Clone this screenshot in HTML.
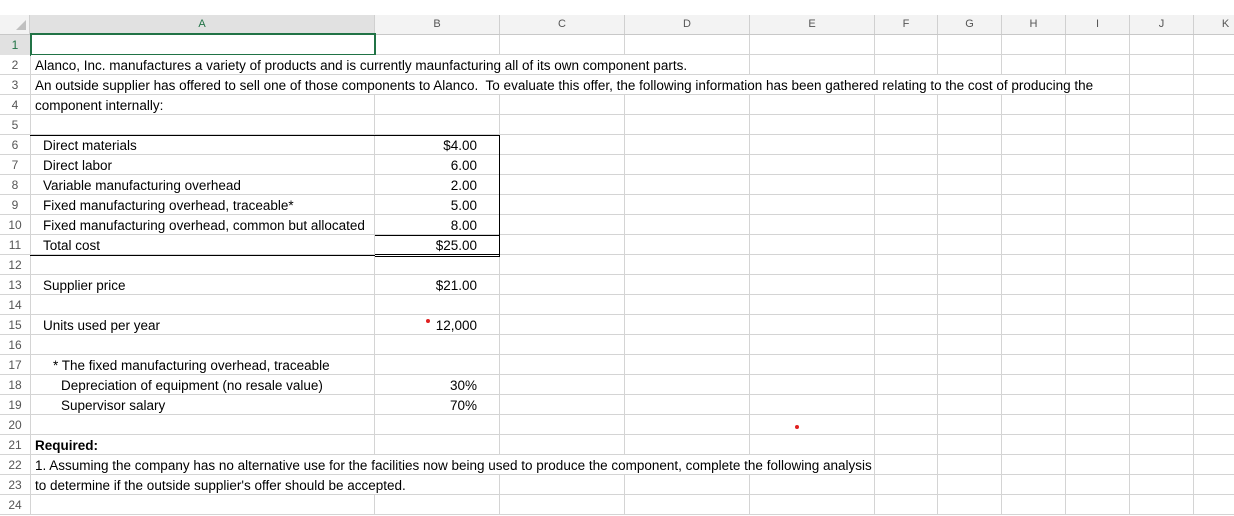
<!DOCTYPE html>
<html><head><style>
body{margin:0;width:1234px;height:510px;overflow:hidden;background:#fff;font-family:"Liberation Sans",sans-serif;font-size:13.5px;color:#000;position:relative}
#grid{position:absolute;left:0;top:35px;width:1234px;height:480px;
background-image:
linear-gradient(#d4d4d4,#d4d4d4),linear-gradient(#d4d4d4,#d4d4d4),linear-gradient(#d4d4d4,#d4d4d4),linear-gradient(#d4d4d4,#d4d4d4),linear-gradient(#d4d4d4,#d4d4d4),linear-gradient(#d4d4d4,#d4d4d4),linear-gradient(#d4d4d4,#d4d4d4),linear-gradient(#d4d4d4,#d4d4d4),linear-gradient(#d4d4d4,#d4d4d4),linear-gradient(#d4d4d4,#d4d4d4),linear-gradient(#d4d4d4,#d4d4d4),
repeating-linear-gradient(to bottom,transparent 0,transparent 19px,#d4d4d4 19px,#d4d4d4 20px);
background-size:1px 100%,1px 100%,1px 100%,1px 100%,1px 100%,1px 100%,1px 100%,1px 100%,1px 100%,1px 100%,1px 100%,100% 100%;
background-position:30px 0,374px 0,499px 0,624px 0,749px 0,874px 0,937px 0,1001px 0,1065px 0,1129px 0,1193px 0,0 0;
background-repeat:no-repeat}
#hdr{position:absolute;left:0;top:15px;width:1234px;height:19px;background:#f3f3f3;border-bottom:1px solid #c8c8c8}
.ch{position:absolute;top:15px;height:19px;line-height:19px;text-align:center;color:#555;font-size:11px;border-right:1px solid #d0d0d0;box-sizing:border-box}
.rn{position:absolute;left:0;width:30px;height:20px;line-height:21px;text-align:center;color:#555;font-size:12px}
.t{position:absolute;height:19px;line-height:21px;background:#fff;white-space:nowrap;box-sizing:border-box}
.n{position:absolute;left:375px;width:102px;height:19px;line-height:21px;text-align:right;background:#fff}
.b{position:absolute;background:#000}
</style></head><body>
<div id="hdr"></div>
<div style="position:absolute;left:0;top:15px;width:30px;height:19px;background:#f3f3f3;border-right:1px solid #d0d0d0;box-sizing:border-box"></div>
<div style="position:absolute;left:16px;top:20px;width:0;height:0;border-left:10px solid transparent;border-bottom:10px solid #c0c0c0"></div>
<div class="ch" style="left:30px;width:345px;background:#e1e1e1;color:#217346;border-bottom:2px solid #217346;height:20px">A</div>
<div class="ch" style="left:375px;width:125px">B</div>
<div class="ch" style="left:500px;width:125px">C</div>
<div class="ch" style="left:625px;width:125px">D</div>
<div class="ch" style="left:750px;width:125px">E</div>
<div class="ch" style="left:875px;width:63px">F</div>
<div class="ch" style="left:938px;width:64px">G</div>
<div class="ch" style="left:1002px;width:64px">H</div>
<div class="ch" style="left:1066px;width:64px">I</div>
<div class="ch" style="left:1130px;width:64px">J</div>
<div class="ch" style="left:1194px;width:64px">K</div>
<div id="grid"></div>
<div style="position:absolute;left:0;top:35px;width:30px;height:20px;background:#e1e1e1"></div>
<div class="rn" style="top:35px;color:#217346">1</div><div class="rn" style="top:55px">2</div><div class="rn" style="top:75px">3</div><div class="rn" style="top:95px">4</div><div class="rn" style="top:115px">5</div><div class="rn" style="top:135px">6</div><div class="rn" style="top:155px">7</div><div class="rn" style="top:175px">8</div><div class="rn" style="top:195px">9</div><div class="rn" style="top:215px">10</div><div class="rn" style="top:235px">11</div><div class="rn" style="top:255px">12</div><div class="rn" style="top:275px">13</div><div class="rn" style="top:295px">14</div><div class="rn" style="top:315px">15</div><div class="rn" style="top:335px">16</div><div class="rn" style="top:355px">17</div><div class="rn" style="top:375px">18</div><div class="rn" style="top:395px">19</div><div class="rn" style="top:415px">20</div><div class="rn" style="top:435px">21</div><div class="rn" style="top:455px">22</div><div class="rn" style="top:475px">23</div><div class="rn" style="top:495px">24</div>
<div style="position:absolute;left:30px;top:33px;width:346px;height:23px;border:2px solid #217346;box-sizing:border-box"></div>
<div class="t" style="top:55px;left:31px;width:718px;padding-left:4px">Alanco, Inc. manufactures a variety of products and is currently maunfacturing all of its own component parts.</div>
<div class="t" style="top:75px;left:31px;width:1098px;padding-left:4px">An outside supplier has offered to sell one of those components to Alanco.&nbsp; To evaluate this offer, the following information has been gathered relating to the cost of producing the</div>
<div class="t" style="top:95px;left:31px;width:343px;padding-left:4px">component internally:</div>
<div class="t" style="top:135px;left:43px">Direct materials</div>
<div class="t" style="top:155px;left:43px">Direct labor</div>
<div class="t" style="top:175px;left:43px">Variable manufacturing overhead</div>
<div class="t" style="top:195px;left:43px">Fixed manufacturing overhead, traceable*</div>
<div class="t" style="top:215px;left:43px">Fixed manufacturing overhead, common but allocated</div>
<div class="t" style="top:235px;left:43px">Total cost</div>
<div class="t" style="top:275px;left:43px">Supplier price</div>
<div class="t" style="top:315px;left:43px">Units used per year</div>
<div class="t" style="top:355px;left:53px">* The fixed manufacturing overhead, traceable</div>
<div class="t" style="top:375px;left:61px">Depreciation of equipment (no resale value)</div>
<div class="t" style="top:395px;left:61px">Supervisor salary</div>
<div class="t" style="top:435px;left:35px;font-weight:bold">Required:</div>
<div class="t" style="top:455px;left:31px;width:843px;padding-left:4px">1. Assuming the company has no alternative use for the facilities now being used to produce the component, complete the following analysis</div>
<div class="t" style="top:475px;left:31px;width:468px;padding-left:4px">to determine if the outside supplier's offer should be accepted.</div>
<div class="n" style="top:135px">$4.00</div>
<div class="n" style="top:155px">6.00</div>
<div class="n" style="top:175px">2.00</div>
<div class="n" style="top:195px">5.00</div>
<div class="n" style="top:215px">8.00</div>
<div class="n" style="top:235px">$25.00</div>
<div class="n" style="top:275px">$21.00</div>
<div class="n" style="top:315px">12,000</div>
<div class="n" style="top:375px">30%</div>
<div class="n" style="top:395px">70%</div>
<div class="b" style="left:30px;top:135px;width:470px;height:1px"></div>
<div class="b" style="left:499px;top:135px;width:1px;height:122px"></div>
<div class="b" style="left:375px;top:235px;width:125px;height:1px"></div>
<div class="b" style="left:30px;top:255px;width:345px;height:1px"></div>
<div class="b" style="left:375px;top:254px;width:125px;height:1px"></div>
<div class="b" style="left:375px;top:256px;width:125px;height:1px"></div>
<div style="position:absolute;left:426px;top:319px;width:4px;height:4px;border-radius:50%;background:#e02020"></div>
<div style="position:absolute;left:795px;top:425px;width:4px;height:4px;border-radius:50%;background:#e02020"></div>
</body></html>
